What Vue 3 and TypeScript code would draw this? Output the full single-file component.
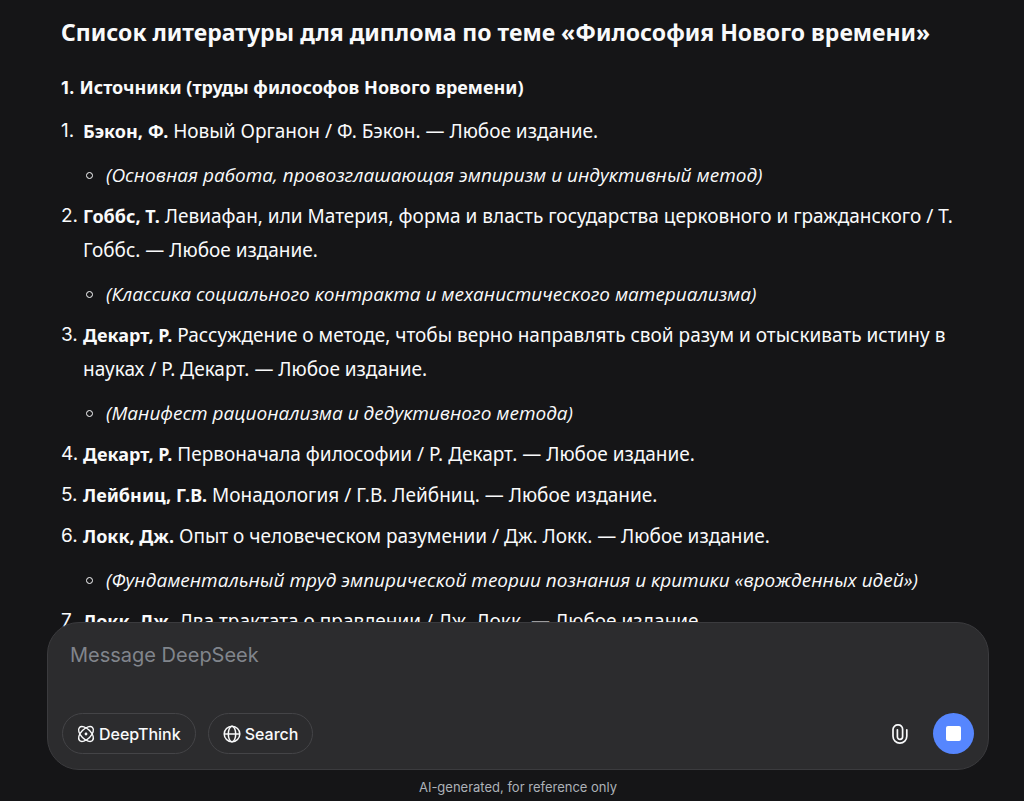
<script setup lang="ts">
import { ref } from 'vue'

interface Source {
  author: string
  lines: string[]
  note?: string
}

const message = ref('')

const sources: Source[] = [
  {
    author: 'Бэкон, Ф.',
    lines: ['Новый Органон / Ф. Бэкон. — Любое издание.'],
    note: '(Основная работа, провозглашающая эмпиризм и индуктивный метод)',
  },
  {
    author: 'Гоббс, Т.',
    lines: [
      'Левиафан, или Материя, форма и власть государства церковного и гражданского / Т.',
      'Гоббс. — Любое издание.',
    ],
    note: '(Классика социального контракта и механистического материализма)',
  },
  {
    author: 'Декарт, Р.',
    lines: [
      'Рассуждение о методе, чтобы верно направлять свой разум и отыскивать истину в',
      'науках / Р. Декарт. — Любое издание.',
    ],
    note: '(Манифест рационализма и дедуктивного метода)',
  },
  { author: 'Декарт, Р.', lines: ['Первоначала философии / Р. Декарт. — Любое издание.'] },
  { author: 'Лейбниц, Г.В.', lines: ['Монадология / Г.В. Лейбниц. — Любое издание.'] },
  {
    author: 'Локк, Дж.',
    lines: ['Опыт о человеческом разумении / Дж. Локк. — Любое издание.'],
    note: '(Фундаментальный труд эмпирической теории познания и критики «врожденных идей»)',
  },
  { author: 'Локк, Дж.', lines: ['Два трактата о правлении / Дж. Локк. — Любое издание.'] },
]
</script>

<template>
  <div class="chat">
    <main class="answer">
      <h1>Список литературы для диплома по теме «Философия Нового времени»</h1>
      <h2><span class="num">1.</span> Источники (труды философов Нового времени)</h2>
      <ol>
        <li v-for="(s, i) in sources" :key="i" class="source">
          <span class="marker">{{ i + 1 }}.</span>
          <div class="body">
            <p>
              <strong>{{ s.author }}</strong>
              <template v-for="(line, n) in s.lines" :key="n"><br v-if="n > 0" />{{ ' ' + line }}</template>
            </p>
            <ul v-if="s.note">
              <li><em>{{ s.note }}</em></li>
            </ul>
          </div>
        </li>
      </ol>
    </main>

    <footer class="dock">
      <form class="composer" @submit.prevent>
        <textarea v-model="message" rows="1" placeholder="Message DeepSeek" aria-label="Message DeepSeek"></textarea>
        <div class="tools">
          <button type="button" class="pill">
            <svg viewBox="0 0 18 18" width="18" height="18" fill="none" stroke="currentColor" stroke-width="1.4" aria-hidden="true">
              <ellipse cx="9" cy="9" rx="9.2" ry="5" transform="rotate(45 9 9)" />
              <ellipse cx="9" cy="9" rx="9.2" ry="5" transform="rotate(-45 9 9)" />
              <circle cx="9" cy="9" r="1.4" fill="currentColor" stroke="none" />
            </svg>
            DeepThink
          </button>
          <button type="button" class="pill">
            <svg viewBox="0 0 18 18" width="18" height="18" fill="none" stroke="currentColor" stroke-width="1.5" aria-hidden="true">
              <circle cx="9" cy="9" r="7.8" />
              <ellipse cx="9" cy="9" rx="3.7" ry="7.8" />
              <path d="M1 9h16" />
            </svg>
            Search
          </button>
          <button type="button" class="attach" aria-label="Attach file">
            <svg viewBox="0 0 16 20" width="16" height="20" fill="none" stroke="currentColor" stroke-width="1.7" stroke-linecap="round" aria-hidden="true">
              <path d="M5.4 5.8v7a2.6 2.6 0 0 0 5.2 0V5.2a4.3 4.3 0 0 0-4.4-4.3A4.7 4.7 0 0 0 1 5.4v6.8a6.8 6.8 0 0 0 13.8 0V5.8" />
            </svg>
          </button>
          <button type="button" class="stop" aria-label="Stop"><span class="square"></span></button>
        </div>
      </form>
      <p class="notice">AI-generated, for reference only</p>
    </footer>
  </div>
</template>

<style>
body {
  margin: 0;
  background: #151517;
}
</style>

<style scoped>
.chat {
  box-sizing: border-box;
  height: 100vh;
  overflow: hidden;
  display: flex;
  flex-direction: column;
  color: #f9fafb;
  background: #151517;
  font-family: "Noto Sans", "Open Sans", sans-serif;
  font-size: 19px;
  line-height: 34px;
}
.answer {
  flex: 1;
  min-height: 0;
  padding: 15px 61px 0;
}
h1 {
  margin: 0 0 21px;
  font-size: 23px;
  line-height: 34px;
  white-space: nowrap;
}
h2 {
  margin: 0 0 10px;
  font-size: 18px;
  line-height: 34px;
}
h1,
h2,
strong {
  font-weight: 700;
}
strong {
  font-size: 18px;
  line-height: 1;
}
em {
  font-family: "Open Sans", "Noto Sans", sans-serif;
}
.num,
.marker {
  font-family: Inter, sans-serif;
}
.num {
  line-height: 1;
}
ol,
ul {
  list-style: none;
  margin: 0;
  padding: 0;
}
ol {
  display: flex;
  flex-direction: column;
  gap: 7px;
}
.source {
  display: flex;
}
.marker {
  flex: none;
  width: 22px;
}
.body {
  white-space: nowrap;
}
p {
  margin: 0;
}
ul li {
  display: flex;
  align-items: center;
  gap: 13px;
  margin-top: 10px;
  padding-left: 3px;
}
ul li::before {
  content: "";
  box-sizing: border-box;
  width: 7px;
  height: 7px;
  border: 1px solid currentColor;
  border-radius: 50%;
}
.dock {
  position: relative;
  z-index: 1;
  flex: none;
  padding: 0 35px 0 47px;
  font-family: Inter, sans-serif;
}
.composer {
  display: flex;
  flex-direction: column;
  gap: 44px;
  padding: 18px 14px 15px;
  border: 1px solid #3b3b3e;
  border-radius: 32px;
  background: #2c2c2e;
}
textarea {
  height: 28px;
  margin: 0;
  padding: 0 8px;
  border: 0;
  outline: 0;
  resize: none;
  background: transparent;
  color: inherit;
  font: 20px/28px Inter, sans-serif;
}
textarea::placeholder {
  color: #81858c;
}
.tools {
  display: flex;
  align-items: center;
}
button {
  display: flex;
  align-items: center;
  justify-content: center;
  padding: 0;
  border: 0;
  background: transparent;
  color: #f9fafb;
  font: 500 16px/24px Inter, sans-serif;
}
.pill {
  gap: 4px;
  height: 41px;
  margin-right: 12px;
  padding: 0 14px;
  border: 1px solid #444447;
  border-radius: 21px;
}
.attach {
  width: 40px;
  height: 41px;
  margin-left: auto;
  margin-right: 13px;
}
.stop {
  width: 41px;
  height: 41px;
  border-radius: 50%;
  background: #5686fe;
}
.square {
  width: 15px;
  height: 15px;
  border-radius: 2px;
  background: #fff;
}
.notice {
  padding: 7px 0 3px;
  text-align: center;
  color: #adb2b8;
  font-size: 13px;
  line-height: 21px;
}
</style>
